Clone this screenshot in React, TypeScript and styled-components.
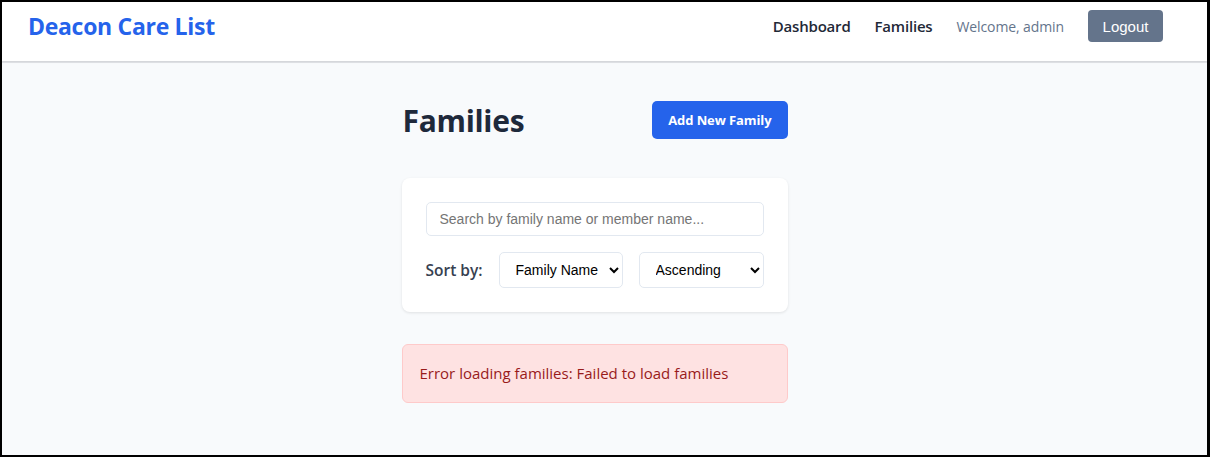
import React, { useState } from 'react';
import styled, { createGlobalStyle } from 'styled-components';

const GlobalStyle = createGlobalStyle`
  html, body {
    margin: 0;
    padding: 0;
  }
  body {
    font-family: 'Open Sans', 'Noto Sans', sans-serif;
    background: #f8fafc;
  }
  * {
    box-sizing: border-box;
  }
`;

const Frame = styled.div`
  height: 457px;
  border: 2px solid #000;
  border-right-width: 3px;
  background: #f8fafc;
  overflow: hidden;
`;

const Header = styled.header`
  display: flex;
  align-items: center;
  justify-content: space-between;
  height: 59px;
  padding: 0 44px 11px 26px;
  background: #ffffff;
  box-shadow: 0 1px 2px rgba(0, 0, 0, 0.1), 0 2px 0 #e5e7eb;
  position: relative;
`;

const Logo = styled.h1`
  margin: 0;
  font-size: 23px;
  font-weight: 700;
  color: #2563eb;
  letter-spacing: -0.3px;
`;

const Nav = styled.nav`
  display: flex;
  align-items: center;
  gap: 24px;
`;

const NavLink = styled.a`
  font-size: 15px;
  font-weight: 600;
  color: #1f2937;
  text-decoration: none;
  letter-spacing: -0.2px;
  cursor: pointer;
`;

const Welcome = styled.span`
  font-size: 14px;
  color: #64748b;
  letter-spacing: -0.1px;
`;

const LogoutButton = styled.button`
  width: 75px;
  height: 32px;
  border: none;
  border-radius: 4px;
  background: #64748b;
  color: #fff;
  font-family: 'Liberation Sans', Arial, sans-serif;
  font-size: 15px;
  cursor: pointer;
`;

const Main = styled.main`
  padding: 39px 20px 0 0;
`;

const Container = styled.div`
  width: 386px;
  margin: 0 auto;
`;

const TitleRow = styled.div`
  display: flex;
  align-items: center;
  justify-content: space-between;
  height: 39px;
  margin-bottom: 39px;
`;

const Title = styled.h2`
  margin: 2px 0 0 1px;
  font-size: 30px;
  line-height: 38px;
  font-weight: 700;
  color: #1e293b;
  letter-spacing: -0.3px;
`;

const PrimaryButton = styled.button`
  height: 38px;
  padding: 0 16px;
  border: none;
  border-radius: 5px;
  background: #2563eb;
  color: #fff;
  font-family: 'Open Sans', sans-serif;
  font-size: 13px;
  font-weight: 700;
  letter-spacing: -0.1px;
  cursor: pointer;
`;

const Card = styled.section`
  background: #fff;
  border-radius: 8px;
  padding: 24px;
  box-shadow: 0 1px 3px rgba(0, 0, 0, 0.1);
  margin-bottom: 32px;
`;

const SearchInput = styled.input`
  display: block;
  width: 100%;
  height: 34px;
  padding: 0 13px;
  border: 1px solid #e2e8f0;
  border-radius: 5px;
  font-family: 'Liberation Sans', Arial, sans-serif;
  font-size: 14px;
  color: #1f2937;
  outline: none;
  &::placeholder {
    color: #757575;
  }
`;

const SortRow = styled.div`
  display: flex;
  align-items: center;
  gap: 16px;
  margin-top: 16px;
`;

const SortLabel = styled.label`
  font-size: 15.5px;
  font-weight: 600;
  color: #374151;
`;

const Select = styled.select<{ $w: number }>`
  width: ${p => p.$w}px;
  height: 36px;
  padding: 0 8px 0 12px;
  border: 1px solid #e2e8f0;
  border-radius: 5px;
  background: #fff;
  font-family: 'Liberation Sans', Arial, sans-serif;
  font-size: 14px;
  color: #000;
`;

const ErrorBox = styled.div`
  padding: 16px 17px;
  background: #fee2e2;
  border: 1px solid #fecaca;
  border-radius: 6px;
  color: #991b1b;
  font-size: 15px;
  line-height: 25px;
`;

function App() {
  const [query, setQuery] = useState('');
  const [sortBy, setSortBy] = useState('name');
  const [order, setOrder] = useState('asc');

  return (
    <>
      <GlobalStyle />
      <Frame>
        <Header>
          <Logo>Deacon Care List</Logo>
          <Nav>
            <NavLink>Dashboard</NavLink>
            <NavLink>Families</NavLink>
            <Welcome>Welcome, admin</Welcome>
            <LogoutButton>Logout</LogoutButton>
          </Nav>
        </Header>

        <Main>
          <Container>
            <TitleRow>
              <Title>Families</Title>
              <PrimaryButton>Add New Family</PrimaryButton>
            </TitleRow>

            <Card>
              <SearchInput
                placeholder="Search by family name or member name..."
                value={query}
                onChange={e => setQuery(e.target.value)}
              />
              <SortRow>
                <SortLabel>Sort by:</SortLabel>
                <Select $w={124} value={sortBy} onChange={e => setSortBy(e.target.value)}>
                  <option value="name">Family Name</option>
                  <option value="members">Members</option>
                  <option value="updated">Last Updated</option>
                </Select>
                <Select $w={125} value={order} onChange={e => setOrder(e.target.value)}>
                  <option value="asc">Ascending</option>
                  <option value="desc">Descending</option>
                </Select>
              </SortRow>
            </Card>

            <ErrorBox>Error loading families: Failed to load families</ErrorBox>
          </Container>
        </Main>
      </Frame>
    </>
  );
}

export default App;
